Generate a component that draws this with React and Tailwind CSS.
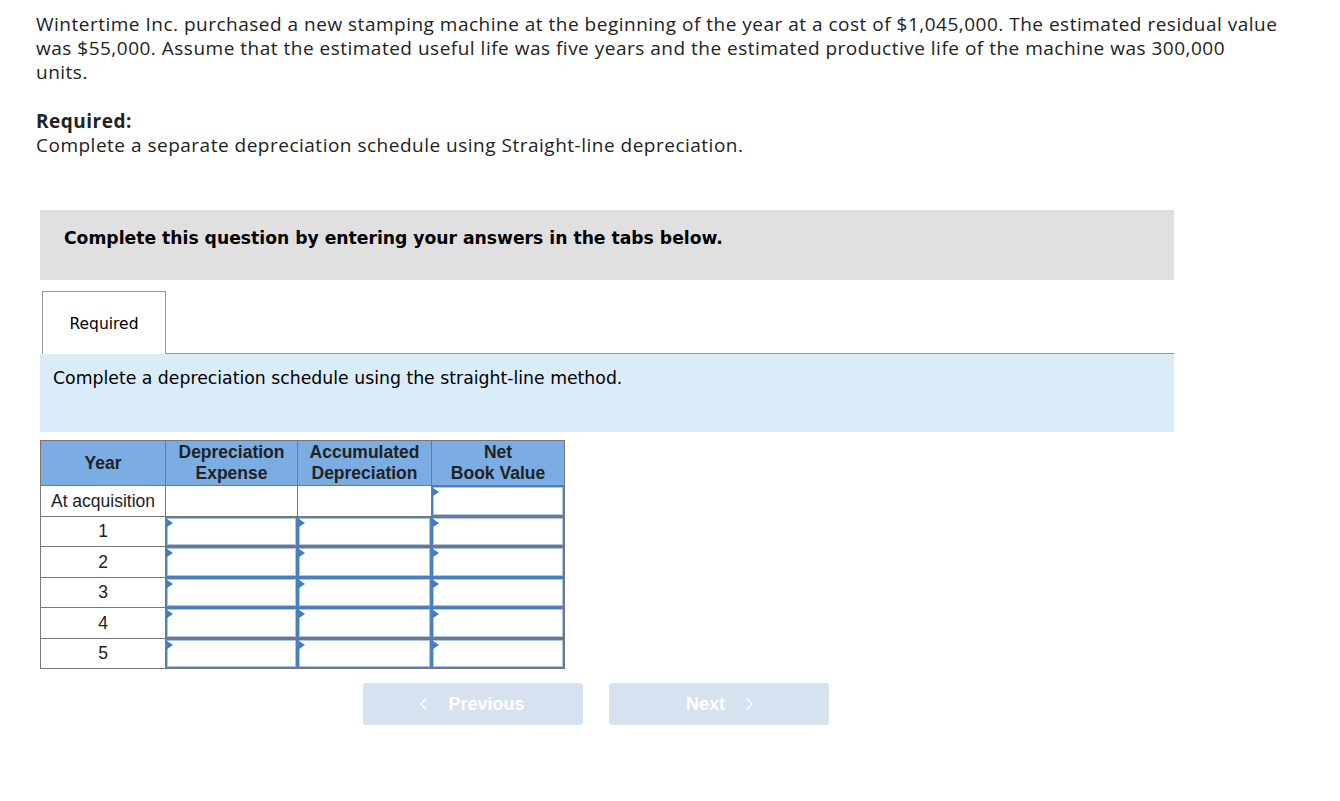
import React from "react";

const rows = ["1", "2", "3", "4", "5"];

const InputCell = () => (
    <td className="border border-[#777] p-0 h-[30.5px]">
        <div className="relative h-full border border-[#4a7ec2] bg-white">
            <div className="h-full border border-[#aac6ea]" />
            <span className="absolute left-0 top-[1px] h-0 w-0 border-y-[4px] border-l-[6px] border-y-transparent border-l-[#3f7cc4]" />
        </div>
    </td>
);

const App = () => {
    return (
        <div className="min-h-[801px] bg-white pt-[12px] pl-[36px] text-[#222]">
            <p className="whitespace-nowrap text-[19px] leading-[24px] tracking-[0.5px] font-['Open_Sans',sans-serif]">
                <span className="block">Wintertime Inc. purchased a new stamping machine at the beginning of the year at a cost of $1,045,000. The estimated residual value</span>
                <span className="block">was $55,000. Assume that the estimated useful life was five years and the estimated productive life of the machine was 300,000</span>
                <span className="block">units.</span>
            </p>

            <div className="mt-[25px] text-[19px] leading-[24px] tracking-[0.5px] font-['Open_Sans',sans-serif]">
                <p className="font-bold">Required:</p>
                <p>Complete a separate depreciation schedule using Straight-line depreciation.</p>
            </div>

            <div className="ml-[4px] mt-[53px] w-[1134px]">
                <div className="h-[70px] bg-[#e0e0e0] pl-[24px] pt-[16px]">
                    <p className="text-[17.2px] font-bold text-black font-['DejaVu_Sans',sans-serif]">
                        Complete this question by entering your answers in the tabs below.
                    </p>
                </div>

                <div className="mt-[11px] flex items-end">
                    <div className="ml-[2px] flex h-[63px] w-[124px] items-center justify-center border border-b-0 border-[#999] bg-white pt-[3px]">
                        <span className="text-[15.5px] text-black font-['DejaVu_Sans',sans-serif]">Required</span>
                    </div>
                    <div className="flex-1 border-b border-[#999]" />
                </div>

                <div className="h-[78px] bg-[#dbecf9] pl-[13px] pt-[12px]">
                    <p className="text-[17.3px] text-black font-['DejaVu_Sans',sans-serif]">
                        Complete a depreciation schedule using the straight-line method.
                    </p>
                </div>

                <table className="mt-[8px] border-collapse text-[17.5px] text-[#222] font-['Liberation_Sans',sans-serif]">
                    <thead>
                        <tr className="h-[45px] bg-[#7badE3] font-bold leading-[21px]">
                            <th className="w-[125px] border border-[#777]">Year</th>
                            <th className="w-[132px] border border-[#777]">Depreciation<br />Expense</th>
                            <th className="w-[134px] border border-[#777]">Accumulated<br />Depreciation</th>
                            <th className="w-[133px] border border-[#777]">Net<br />Book Value</th>
                        </tr>
                    </thead>
                    <tbody>
                        <tr className="h-[30.5px]">
                            <td className="border border-[#777] text-center">At acquisition</td>
                            <td className="border border-[#777]" />
                            <td className="border border-[#777]" />
                            <InputCell />
                        </tr>
                        {rows.map((r) => (
                            <tr key={r} className="h-[30.5px]">
                                <td className="border border-[#777] text-center">{r}</td>
                                <InputCell />
                                <InputCell />
                                <InputCell />
                            </tr>
                        ))}
                    </tbody>
                </table>

                <div className="mt-[14px] flex gap-[26px] pl-[323px]">
                    <button
                        type="button"
                        className="flex h-[42px] w-[220px] items-center justify-center gap-[20px] rounded-[3px] bg-[#d6e2f0] pr-[2px] text-[18px] font-bold text-white font-['Liberation_Sans',sans-serif]"
                    >
                        <svg width="9" height="14" viewBox="0 0 9 14" fill="none" stroke="white" strokeWidth="1.5">
                            <path d="M7 1.5 L2 7 L7 12.5" />
                        </svg>
                        Previous
                    </button>
                    <button
                        type="button"
                        className="flex h-[42px] w-[220px] items-center justify-center gap-[20px] rounded-[3px] bg-[#d6e2f0] pl-[2px] text-[18px] font-bold text-white font-['Liberation_Sans',sans-serif]"
                    >
                        Next
                        <svg width="9" height="14" viewBox="0 0 9 14" fill="none" stroke="white" strokeWidth="1.5">
                            <path d="M2 1.5 L7 7 L2 12.5" />
                        </svg>
                    </button>
                </div>
            </div>
        </div>
    );
};

export default App;
